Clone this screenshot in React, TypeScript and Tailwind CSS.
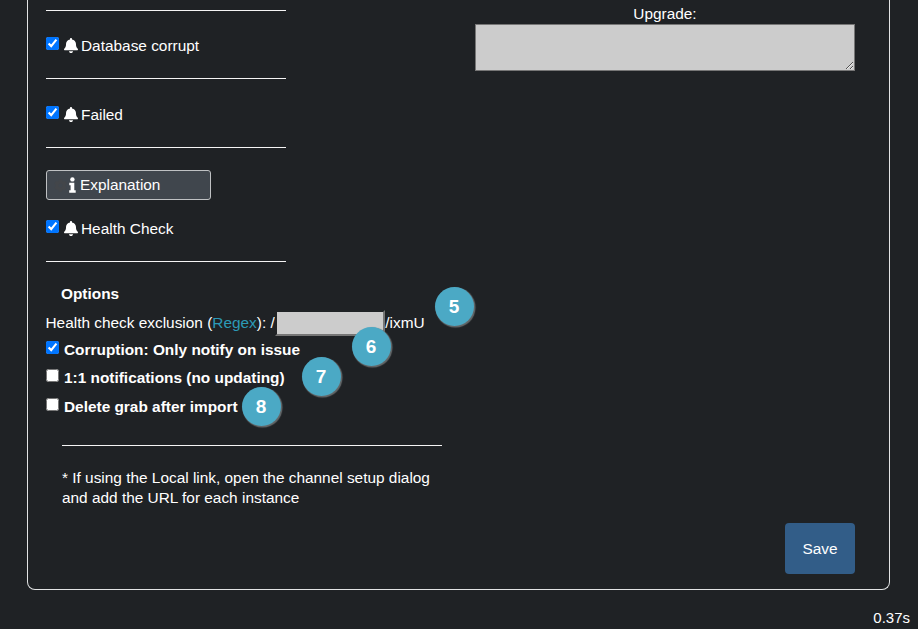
import type { ReactNode } from "react";
import { FaCog } from "react-icons/fa";
import { FaBell } from "react-icons/fa6";

function Box({ checked = false }: { checked?: boolean }) {
  return <input type="checkbox" defaultChecked={checked} className="m-0 block h-[13px] w-[13px] shrink-0" />;
}

function Divider() {
  return <div className="h-px w-[240px] bg-[#f5f5f5]" />;
}

function InfoGlyph() {
  return (
    <svg viewBox="0 0 7 16" className="ml-[2px] h-[16px] w-[7px] shrink-0" fill="currentColor">
      <circle cx="3.4" cy="2.4" r="2.2" />
      <path d="M.3 5.8h5v7.4h1.4v2.5H.2v-2.5h1.4V8.3H.3z" />
    </svg>
  );
}

function Trigger({ label }: { label: string }) {
  return (
    <label className="flex h-[20px] items-start">
      <Box checked />
      <FaBell preserveAspectRatio="none" className="mt-[1px] ml-[4.5px] h-[15px] w-[14px] shrink-0" />
      <span className="ml-[3.5px] leading-[18px]">{label}</span>
    </label>
  );
}

function Option({ label, checked, children }: { label: string; checked?: boolean; children?: ReactNode }) {
  return (
    <div className="relative flex h-[20px] items-start">
      <Box checked={checked} />
      <span className="ml-[5px] leading-[18px] font-bold whitespace-nowrap">{label}</span>
      {children}
    </div>
  );
}

function Marker({ n, place }: { n: number; place: string }) {
  return (
    <span
      className={`absolute z-10 flex h-[39px] w-[39px] items-center justify-center rounded-full bg-[#4ba9c5] pb-[1px] text-[19px] leading-none font-bold shadow-[1px_1px_1px_0.5px_#64696b] ${place}`}
    >
      {n}
    </span>
  );
}

export default function App() {
  return (
    <div className="flex h-[629px] w-[918px] flex-col overflow-hidden bg-[#1f2225] font-['Liberation_Sans',Arial,sans-serif] text-[15.4px] text-white">
      <main className="ml-[27px] flex h-[590px] w-[863px] shrink-0 rounded-b-[8px] border-x border-b border-[#e2e4e5] pl-[18px]">
        <section className="w-[429px] shrink-0 pt-[10px]">
          <Divider />
          <div className="pt-[26px] pb-[21px]">
            <Trigger label="Database corrupt" />
          </div>
          <Divider />
          <div className="pt-[27px] pb-[21px]">
            <Trigger label="Failed" />
          </div>
          <Divider />
          <button className="mt-[22px] flex h-[30px] w-[165px] items-center rounded-[3px] border border-[#bfc1c3] bg-[#40464d] pl-[7px]">
            <FaCog className="h-[13px] w-[13px] text-[#43464a]" />
            <InfoGlyph />
            <span className="ml-[4px]">Explanation</span>
          </button>
          <div className="pt-[20px] pb-[21px]">
            <Trigger label="Health Check" />
          </div>
          <Divider />
          <h2 className="mt-[22px] pl-[15px] leading-[20px] font-bold">Options</h2>
          <div className="relative mt-[6px] flex h-[27px] items-start leading-[26px] whitespace-nowrap">
            <span className="-ml-[0.5px]">
              Health check exclusion (<a className="text-[#2c9ab7]">Regex</a>): /
            </span>
            <input className="ml-[0.5px] h-[26px] w-[110px] rounded-none border-2 border-[#767676] border-t-[#1f2225] border-l-[#1f2225] bg-[#cccccc]" />
            <span>/ixmU</span>
            <Marker n={5} place="top-[-23px] left-[388.5px]" />
          </div>
          <div className="mt-[4px]">
            <Option label="Corruption: Only notify on issue" checked>
              <Marker n={6} place="top-[-14px] left-[305.5px]" />
            </Option>
          </div>
          <div className="mt-[8px]">
            <Option label="1:1 notifications (no updating)">
              <Marker n={7} place="top-[-12px] left-[255.5px]" />
            </Option>
          </div>
          <div className="mt-[9px]">
            <Option label="Delete grab after import">
              <Marker n={8} place="top-[-11px] left-[195.5px]" />
            </Option>
          </div>
          <div className="mt-[27px] ml-[16px] h-px w-[380px] bg-[#f5f5f5]" />
          <p className="mt-[22px] ml-[16px] w-[380px] leading-[20px]">
            * If using the Local link, open the channel setup dialog and add the URL for each instance
          </p>
        </section>
        <section className="flex w-[380px] shrink-0 flex-col pt-[4px]">
          <label className="text-center leading-[20px]">Upgrade:</label>
          <textarea className="block h-[47px] w-[380px] resize rounded-none border border-[#767676] bg-[#cccccc]" />
          <button className="mt-auto mb-[15px] h-[51px] w-[70px] self-end rounded-[4px] bg-[#325d88] pt-[1px]">Save</button>
        </section>
      </main>
      <footer className="mt-[18px] pr-[8px] text-right text-[15px] leading-[20px]">0.37s</footer>
    </div>
  );
}
